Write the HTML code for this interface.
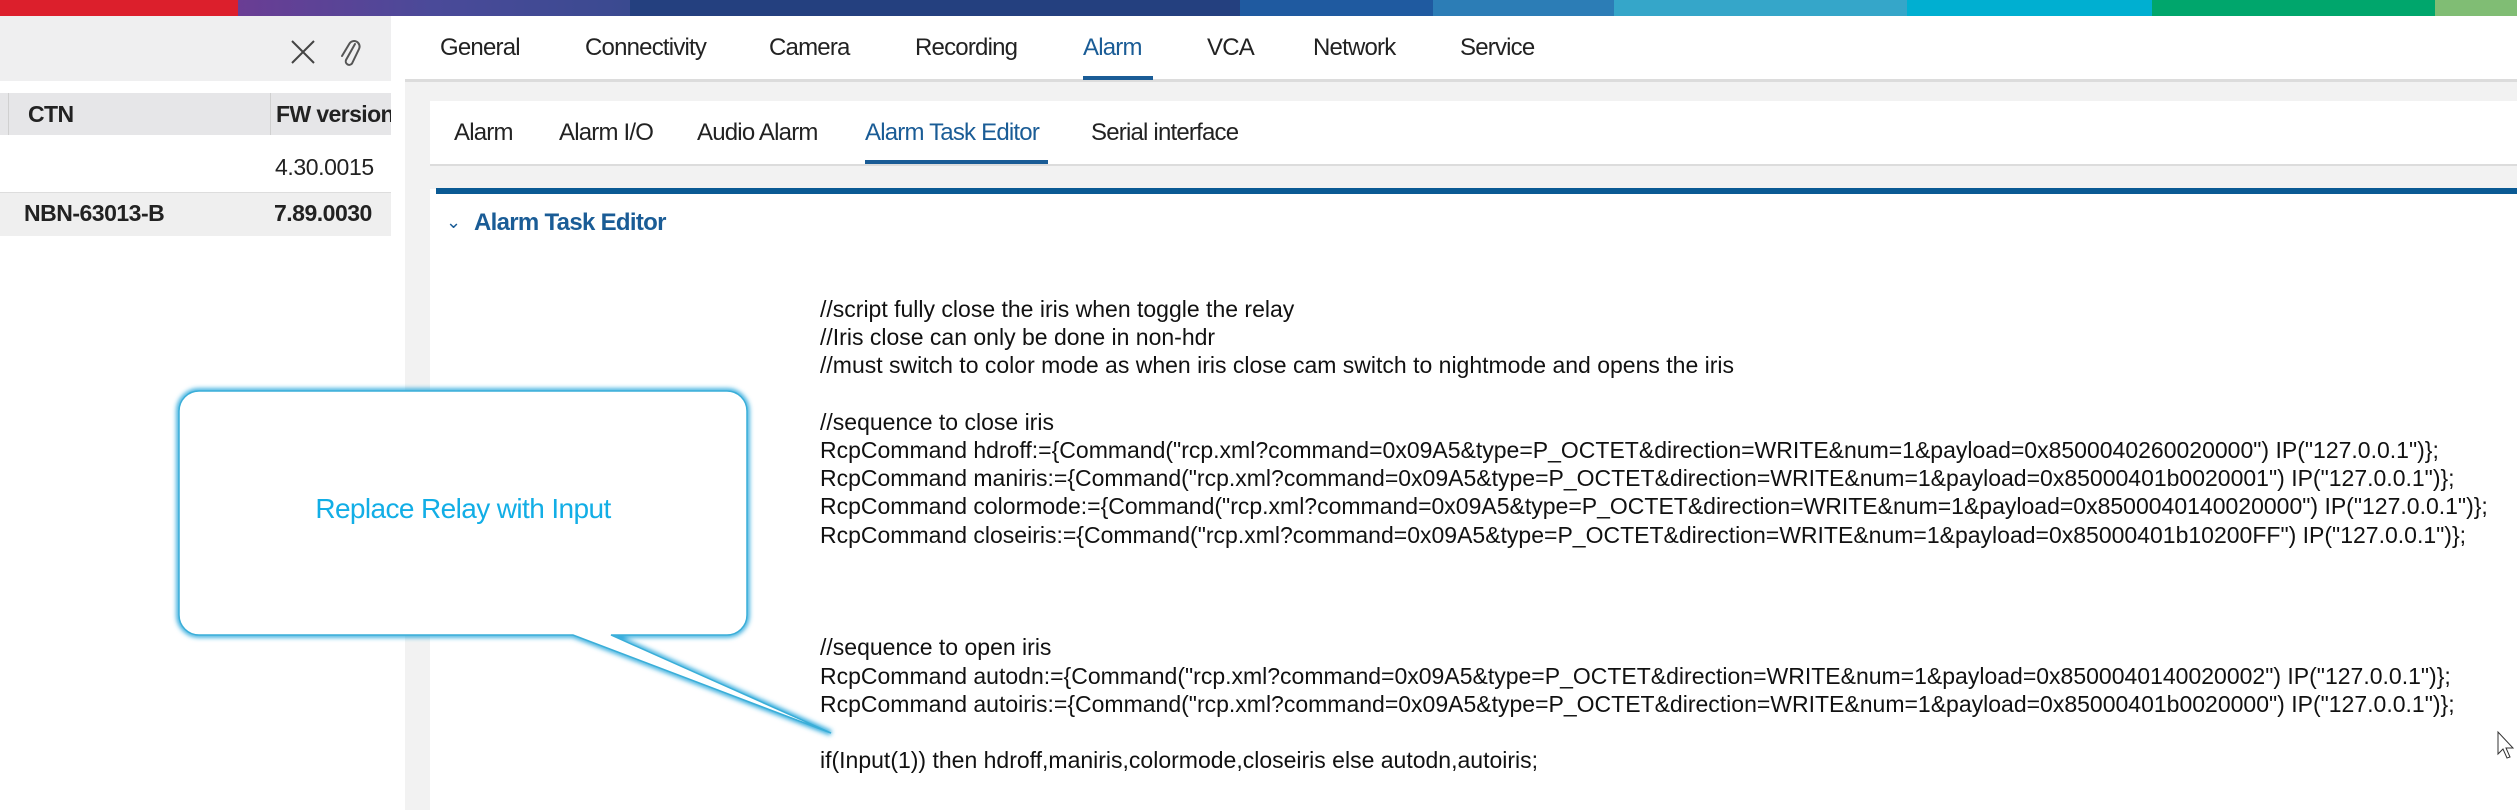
<!DOCTYPE html>
<html><head><meta charset="utf-8"><style>
*{margin:0;padding:0;box-sizing:border-box}
body{width:2517px;height:810px;position:relative;overflow:hidden;background:#fff;font-family:"Liberation Sans",Arial,sans-serif;color:#222}
.a{position:absolute;white-space:nowrap}
.bar{position:absolute;top:0;height:16px}
.tab{position:absolute;top:34px;font-size:24px;color:#222;letter-spacing:-0.8px}
.st{position:absolute;top:119px;font-size:24px;color:#222;letter-spacing:-0.8px}
.code{position:absolute;left:820px;top:295px;font-size:23px;line-height:28.2px;color:#111;white-space:pre;letter-spacing:0}
</style></head><body>
<div class="bar" style="left:0;width:238px;background:#dc1f2c"></div>
<div class="bar" style="left:238px;width:392px;background:linear-gradient(90deg,#6a3d94,#4a4a99,#3a4a90)"></div>
<div class="bar" style="left:630px;width:610px;background:#24407f"></div>
<div class="bar" style="left:1240px;width:193px;background:#1f5aa0"></div>
<div class="bar" style="left:1433px;width:181px;background:#2c7db6"></div>
<div class="bar" style="left:1614px;width:293px;background:#35a6c9"></div>
<div class="bar" style="left:1907px;width:245px;background:#00afd1"></div>
<div class="bar" style="left:2152px;width:283px;background:#00a66c"></div>
<div class="bar" style="left:2435px;width:82px;background:#80bd74"></div>

<!-- left panel -->
<div class="a" style="left:0;top:16px;width:391px;height:65px;background:#efeff0"></div>
<svg class="a" style="left:289px;top:38px" width="28" height="28" viewBox="0 0 28 28"><path d="M3 3L25 25M25 3L3 25" stroke="#444" stroke-width="2" fill="none"/></svg>
<svg class="a" style="left:338px;top:36px" width="24" height="32" viewBox="0 0 24 32"><path d="M17 8L8 24a3.5 3.5 0 0 0 6 3.5L21 13a5.5 5.5 0 0 0-9.5-5.5L4 20" stroke="#555" stroke-width="2" fill="none" stroke-linecap="round"/></svg>
<div class="a" style="left:0;top:81px;width:391px;height:12px;background:#fff"></div>
<div class="a" style="left:0;top:93px;width:391px;height:42px;background:#e6e6e8"></div>
<div class="a" style="left:8px;top:93px;width:1px;height:42px;background:#d0d0d0"></div>
<div class="a" style="left:270px;top:93px;width:1px;height:42px;background:#d0d0d0"></div>
<div class="a" style="left:28px;top:101px;font-size:23px;font-weight:bold;letter-spacing:-0.6px">CTN</div>
<div class="a" style="left:276px;top:101px;font-size:23px;font-weight:bold;letter-spacing:-0.6px;width:115px;overflow:hidden">FW version</div>
<div class="a" style="left:275px;top:154px;font-size:23px;letter-spacing:-0.4px">4.30.0015</div>
<div class="a" style="left:0;top:192px;width:391px;height:44px;background:#efefef;border-top:1px solid #ddd"></div>
<div class="a" style="left:24px;top:200px;font-size:23px;font-weight:bold;letter-spacing:-0.5px">NBN-63013-B</div>
<div class="a" style="left:274px;top:200px;font-size:23px;font-weight:bold;letter-spacing:-0.5px">7.89.0030</div>

<!-- gutter -->
<div class="a" style="left:405px;top:81px;width:25px;height:729px;background:#f2f2f2"></div>

<!-- main nav -->
<div class="a" style="left:405px;top:79px;width:2112px;height:3px;background:#dcdcdc"></div>
<div class="a" style="left:405px;top:82px;width:2112px;height:19px;background:#f2f2f2"></div>
<div class="tab" style="left:440px">General</div>
<div class="tab" style="left:585px">Connectivity</div>
<div class="tab" style="left:769px">Camera</div>
<div class="tab" style="left:915px">Recording</div>
<div class="tab" style="left:1083px;color:#1a5c96">Alarm</div>
<div class="tab" style="left:1207px">VCA</div>
<div class="tab" style="left:1313px">Network</div>
<div class="tab" style="left:1460px">Service</div>
<div class="a" style="left:1083px;top:76px;width:70px;height:4px;background:#1a5c96"></div>

<!-- sub nav -->
<div class="st" style="left:454px">Alarm</div>
<div class="st" style="left:559px">Alarm I/O</div>
<div class="st" style="left:697px">Audio Alarm</div>
<div class="st" style="left:865px;color:#1a5c96">Alarm Task Editor</div>
<div class="st" style="left:1091px">Serial interface</div>
<div class="a" style="left:865px;top:160px;width:183px;height:4px;background:#1a5c96"></div>
<div class="a" style="left:430px;top:164px;width:2087px;height:2px;background:#dcdcdc"></div>
<div class="a" style="left:430px;top:166px;width:2087px;height:23px;background:#f2f2f2"></div>
<div class="a" style="left:436px;top:188px;width:2081px;height:6px;background:#0a5a94"></div>

<div class="a" style="left:446px;top:212px;font-size:18px;color:#1a5c96">&#8964;</div>
<div class="a" style="left:474px;top:209px;font-size:24px;font-weight:bold;color:#1a5c96;letter-spacing:-0.7px">Alarm Task Editor</div>

<div class="code">//script fully close the iris when toggle the relay
//Iris close can only be done in non-hdr
//must switch to color mode as when iris close cam switch to nightmode and opens the iris

//sequence to close iris
RcpCommand hdroff:={Command("rcp.xml?command=0x09A5&amp;type=P_OCTET&amp;direction=WRITE&amp;num=1&amp;payload=0x8500040260020000") IP("127.0.0.1")};
RcpCommand maniris:={Command("rcp.xml?command=0x09A5&amp;type=P_OCTET&amp;direction=WRITE&amp;num=1&amp;payload=0x85000401b0020001") IP("127.0.0.1")};
RcpCommand colormode:={Command("rcp.xml?command=0x09A5&amp;type=P_OCTET&amp;direction=WRITE&amp;num=1&amp;payload=0x8500040140020000") IP("127.0.0.1")};
RcpCommand closeiris:={Command("rcp.xml?command=0x09A5&amp;type=P_OCTET&amp;direction=WRITE&amp;num=1&amp;payload=0x85000401b10200FF") IP("127.0.0.1")};



//sequence to open iris
RcpCommand autodn:={Command("rcp.xml?command=0x09A5&amp;type=P_OCTET&amp;direction=WRITE&amp;num=1&amp;payload=0x8500040140020002") IP("127.0.0.1")};
RcpCommand autoiris:={Command("rcp.xml?command=0x09A5&amp;type=P_OCTET&amp;direction=WRITE&amp;num=1&amp;payload=0x85000401b0020000") IP("127.0.0.1")};

if(Input(1)) then hdroff,maniris,colormode,closeiris else autodn,autoiris;</div>

<!-- callout -->
<svg class="a" style="left:0;top:0" width="2517" height="810">
<defs><filter id="g" x="-10%" y="-10%" width="120%" height="130%"><feGaussianBlur stdDeviation="2.5"/></filter></defs>
<path d="M199 391 H727 a20 20 0 0 1 20 20 V615 a20 20 0 0 1-20 20 H611 L831 733 L573 635 H199 a20 20 0 0 1-20-20 V411 a20 20 0 0 1 20-20Z" fill="none" stroke="#2aa8dc" stroke-width="5" filter="url(#g)"/>
<path d="M199 391 H727 a20 20 0 0 1 20 20 V615 a20 20 0 0 1-20 20 H611 L831 733 L573 635 H199 a20 20 0 0 1-20-20 V411 a20 20 0 0 1 20-20Z" fill="#fff" stroke="#3aaed8" stroke-width="1.5"/>
<path d="M2498 732 v22 l5-5 4 9 3-1-4-9 7 0z" fill="#fff" stroke="#333" stroke-width="1"/>
</svg>
<div class="a" style="left:179px;top:493px;width:568px;text-align:center;font-size:28px;color:#12aee6;letter-spacing:-0.6px">Replace Relay with Input</div>
</body></html>
